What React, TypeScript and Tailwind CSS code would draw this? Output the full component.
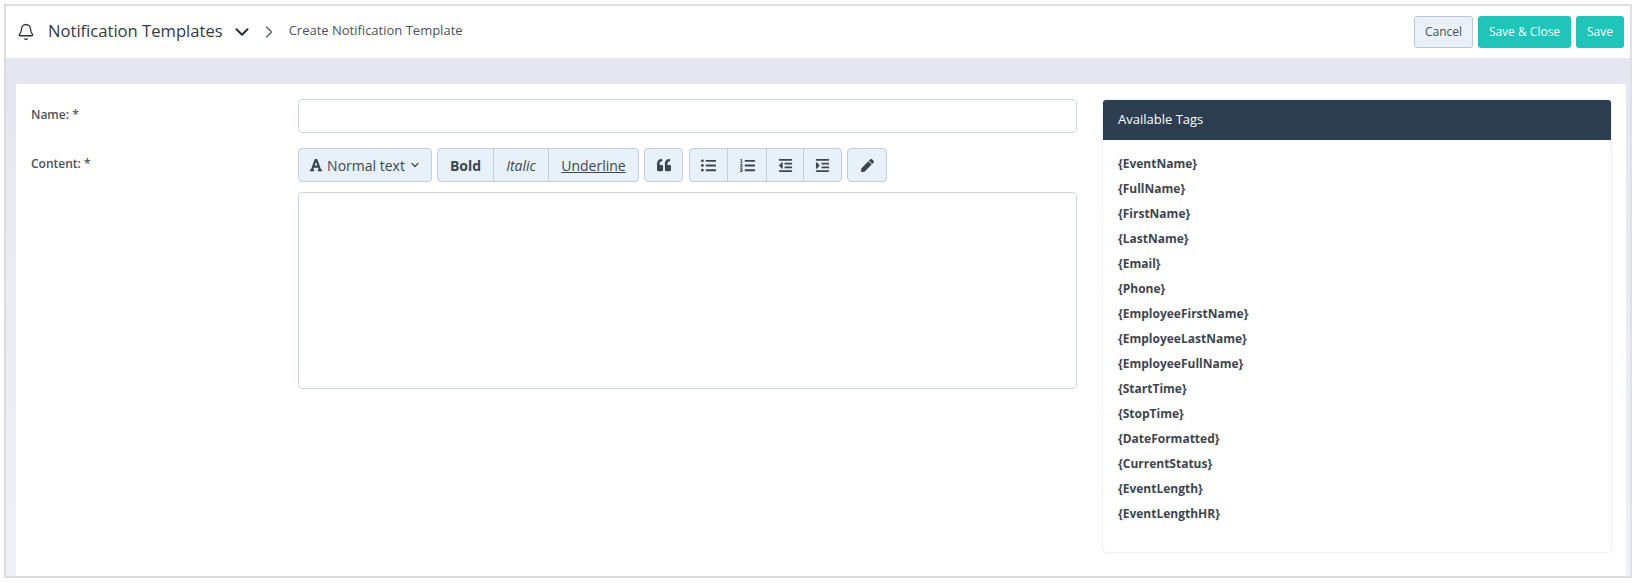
import { Bell, ChevronDown, ChevronRight } from "lucide-react";
import { FaFont, FaIndent, FaListOl, FaListUl, FaOutdent, FaPen, FaQuoteLeft } from "react-icons/fa";

const tags = [
  "{EventName}",
  "{FullName}",
  "{FirstName}",
  "{LastName}",
  "{Email}",
  "{Phone}",
  "{EmployeeFirstName}",
  "{EmployeeLastName}",
  "{EmployeeFullName}",
  "{StartTime}",
  "{StopTime}",
  "{DateFormatted}",
  "{CurrentStatus}",
  "{EventLength}",
  "{EventLengthHR}",
];

const toolButton = "flex h-full items-center justify-center border-r border-[#c3ced9] last:border-r-0";
const toolGroup = "flex h-[34px] items-center rounded-[4px] border border-[#c3ced9] bg-[#e8f1f9] text-[#3c4650]";

export default function App() {
  return (
    <div className="h-[583px] w-[1635px] overflow-hidden bg-white pb-[5px] pl-[4px] pr-[3px] pt-[4px] font-['Open_Sans',sans-serif] text-[#3d4550]">
      <div className="flex h-full flex-col border-[2px] border-[#dcdde1] border-r-[#dfe0e6]">
        <header className="flex h-[52px] shrink-0 items-center bg-white pl-[11px] pr-[6px]">
          <Bell size={18} strokeWidth={1.7} className="text-[#2b2f36]" />
          <h1 className="mb-[2px] ml-[13px] text-[16.6px] leading-none text-[#343a43]">Notification Templates</h1>
          <ChevronDown size={22} strokeWidth={2.3} className="ml-[8px] text-[#2b2f36]" />
          <ChevronRight size={20} strokeWidth={1.5} className="ml-[6px] text-[#555c66]" />
          <span className="mb-[2px] ml-[10px] text-[13px] text-[#4b525c]">Create Notification Template</span>
          <div className="ml-auto flex items-center gap-[5px] text-[12px]">
            <button type="button" className="h-[32px] w-[59px] rounded-[3px] border border-[#bcc5d3] bg-[#eaf1f8] text-[#48505a]">Cancel</button>
            <button type="button" className="h-[32px] w-[93px] rounded-[3px] bg-[#20c4b8] text-white">Save &amp; Close</button>
            <button type="button" className="h-[32px] w-[48px] rounded-[3px] bg-[#20c4b8] text-white">Save</button>
          </div>
        </header>
        <div className="flex-1 bg-gradient-to-b from-[#e5e7f0] to-[#f0f1f7] pl-[10px] pr-[4px] pt-[26px]">
          <main className="flex h-full gap-[25px] rounded-t-[2px] bg-white pl-[15px] pr-[16px] pt-[15px]">
            <div className="w-[1047px] shrink-0">
              <div className="flex">
                <label className="w-[267px] pt-[7px] text-[12px] font-semibold text-[#4a515b]">Name: *</label>
                <input className="h-[34px] w-[779px] rounded-[4px] border border-[#ced6df] bg-white" />
              </div>
              <div className="mt-[15px] flex">
                <label className="w-[267px] pt-[7px] text-[12px] font-semibold text-[#4a515b]">Content: *</label>
                <div className="w-[779px]">
                  <div className="flex gap-[5px]">
                    <button type="button" className={`${toolGroup} w-[134px] justify-center gap-[4px] text-[14px]`}>
                      <FaFont size={14} />
                      <span>Normal text</span>
                      <ChevronDown size={12} strokeWidth={2.4} />
                    </button>
                    <div className={`${toolGroup} text-[14px]`}>
                      <button type="button" className={`${toolButton} w-[56px] font-bold`}>Bold</button>
                      <button type="button" className={`${toolButton} w-[55px] italic`}>Italic</button>
                      <button type="button" className={`${toolButton} w-[89px] underline`}>Underline</button>
                    </div>
                    <div className={toolGroup}>
                      <button type="button" className={`${toolButton} w-[37px]`}><FaQuoteLeft size={14} /></button>
                    </div>
                    <div className={`${toolGroup} ml-[1px]`}>
                      <button type="button" className={`${toolButton} w-[38px]`}><FaListUl size={15} /></button>
                      <button type="button" className={`${toolButton} w-[39px]`}><FaListOl size={15} /></button>
                      <button type="button" className={`${toolButton} w-[37px]`}><FaOutdent size={15} /></button>
                      <button type="button" className={`${toolButton} w-[37px]`}><FaIndent size={15} /></button>
                    </div>
                    <div className={toolGroup}>
                      <button type="button" className={`${toolButton} w-[38px]`}><FaPen size={13} /></button>
                    </div>
                  </div>
                  <textarea className="mt-[10px] block h-[197px] w-full resize-none rounded-[4px] border border-[#ced6df] bg-white" />
                </div>
              </div>
            </div>
            <aside className="mt-[1px] h-[452px] w-[508px] shrink-0 rounded-[3px] bg-white shadow-[0_0_2px_rgba(0,0,0,0.22)]">
              <div className="flex h-[40px] items-center rounded-t-[3px] bg-[#2c3e50] pl-[15px] text-[13px] text-white">
                Available Tags
              </div>
              <ul className="px-[15px] pt-[11px]">
                {tags.map((tag) => (
                  <li key={tag} className="h-[25px] text-[12px] font-bold leading-[25px] text-[#3d4550]">{tag}</li>
                ))}
              </ul>
            </aside>
          </main>
        </div>
      </div>
    </div>
  );
}
